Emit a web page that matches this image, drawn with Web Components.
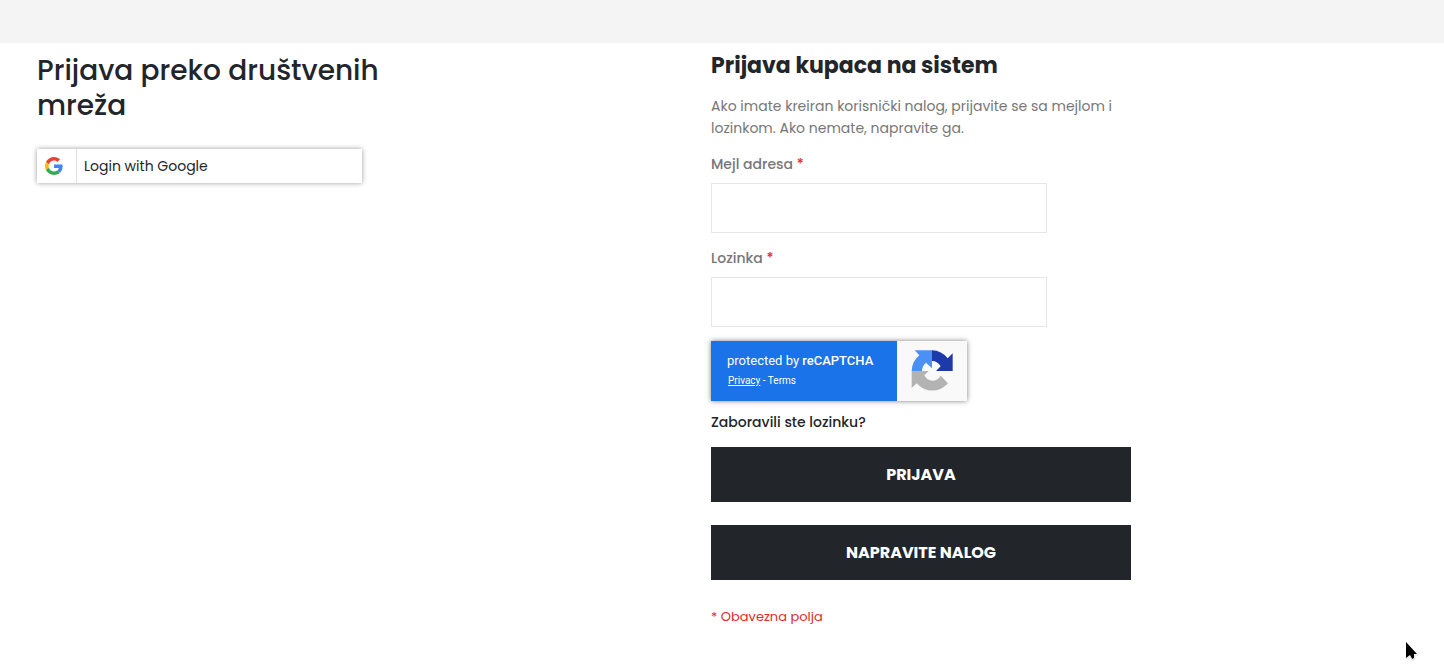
<!DOCTYPE html>
<html lang="sr-Latn">
<head>
<meta charset="utf-8">
<meta name="viewport" content="width=device-width, initial-scale=1">
<title>Prijava</title>
<style>
body { margin: 0; min-height: 100vh; background: #fff; color: #222529; font: 14px/22px Poppins, Inter, "Open Sans", sans-serif; }
</style>
</head>
<body>
<login-page></login-page>
<script>
function define(name, html) {
  customElements.define(name, class extends HTMLElement {
    constructor() {
      super();
      const t = document.createElement('template');
      t.innerHTML = html;
      this.attachShadow({ mode: 'open' }).append(t.content.cloneNode(true));
    }
  });
}

define('google-button', `
<style>
:host { display: block; }
button { display: flex; align-items: center; width: 100%; height: 34px; padding: 0; border: 0; background: #fff; color: #222529; font: inherit; box-shadow: 0 0 5px rgba(0,0,0,.4); cursor: pointer; }
.icon { display: flex; align-items: center; box-sizing: border-box; width: 40px; height: 34px; padding-left: 8px; border-right: 1px solid #e1e1e1; }
.label { padding-left: 7px; }
</style>
<button type="button">
  <span class="icon"><svg width="18" height="18" viewBox="0 0 48 48" aria-hidden="true">
    <path fill="#EA4335" d="M24 9.5c3.54 0 6.71 1.22 9.21 3.6l6.85-6.85C35.9 2.38 30.47 0 24 0 14.62 0 6.51 5.38 2.56 13.22l7.98 6.19C12.43 13.72 17.74 9.5 24 9.5z"/>
    <path fill="#4285F4" d="M46.98 24.55c0-1.57-.15-3.09-.38-4.55H24v9.02h12.94c-.58 2.96-2.26 5.48-4.78 7.18l7.73 6c4.51-4.18 7.09-10.36 7.09-17.65z"/>
    <path fill="#FBBC05" d="M10.53 28.59c-.48-1.45-.76-2.99-.76-4.59s.27-3.14.76-4.59l-7.98-6.19C.92 16.46 0 20.12 0 24c0 3.88.92 7.54 2.56 10.78l7.97-6.19z"/>
    <path fill="#34A853" d="M24 48c6.48 0 11.93-2.13 15.89-5.81l-7.73-6c-2.15 1.45-4.92 2.3-8.16 2.3-6.26 0-11.57-4.22-13.47-9.91l-7.98 6.19C6.51 42.62 14.62 48 24 48z"/>
  </svg></span>
  <span class="label"><slot></slot></span>
</button>`);

define('recaptcha-badge', `
<style>
:host { display: flex; width: 256px; height: 60px; box-shadow: 0 0 5px rgba(0,0,0,.5); color: #fff; font-family: Roboto, sans-serif; }
.text { box-sizing: border-box; width: 186px; padding: 10px 16px; background: #1a73e8; font-size: 13px; line-height: 20px; white-space: nowrap; }
strong { font-weight: 500; }
.links { padding-left: 1px; font-size: 10px; }
a { color: inherit; text-decoration: none; }
.privacy { text-decoration: underline; }
.logo { display: flex; flex: 1; align-items: center; justify-content: center; background: #f9f9f9; }
</style>
<div class="text">
  <div>protected by <strong>reCAPTCHA</strong></div>
  <div class="links"><a class="privacy" href="#privacy">Privacy</a> - <a href="#terms">Terms</a></div>
</div>
<div class="logo"><svg width="48" height="48" viewBox="0 0 144 144" aria-hidden="true">
  <path fill="#4a90f5" d="M72 10H20L34 25A62 62 0 0 0 11 72H42C42 62 46 54 54 47L72 64Z"/>
  <path fill="#1c3aa9" d="M72 10A62 62 0 0 1 119 34L134 19V72H84L98 58C92 48 84 42 72 42Z"/>
  <path fill="#b3b3b3" d="M11 72H62L49 85C58 105 86 108 98 86L120 109A62 62 0 0 1 26 109L11 123Z"/>
</svg></div>`);

define('text-field', `
<style>
:host { display: block; }
label { display: block; margin-bottom: 8px; color: #777; font-weight: 500; }
span { color: #e02b27; }
input { display: block; box-sizing: border-box; width: 80%; height: 50px; padding: 0 12px; border: 1px solid #e7e7e7; background: #fff; font: inherit; outline: 0; }
</style>
<label for="field"><slot></slot> <span>*</span></label>
<input id="field" required>`);

define('action-button', `
<style>
:host { display: block; }
button { display: block; width: 100%; height: 55px; padding: 0; border: 0; background: #222529; color: #fff; font: 700 16px/24px Poppins, Inter, "Open Sans", sans-serif; cursor: pointer; }
</style>
<button type="button"><slot></slot></button>`);

define('mouse-pointer', `
<style>
:host { position: absolute; top: 641px; right: 25px; pointer-events: none; }
svg { display: block; }
</style>
<svg width="14" height="20" viewBox="0 0 14 20" aria-hidden="true"><path fill="#000" d="M1 1v16l4-3 2 4 2-1v-4h3z"/><path fill="none" stroke="#ddd" d="M1 18l4-3 2 4 3-1v-4h3"/></svg>`);

define('login-page', `
<style>
:host { display: block; }
header { height: 43px; background: #f4f4f4; }
main { display: grid; grid-template-columns: 1fr 1fr; padding: 10px 59px 28px 37px; }
h1, h2, p { margin: 0; }
h1 { max-width: 370px; margin-bottom: 26px; font-size: 28px; line-height: 35px; font-weight: 500; }
google-button { max-width: 325px; }
.login { display: flex; flex-direction: column; gap: 14px; max-width: 420px; }
h2 { font-size: 22px; line-height: 26px; font-weight: 700; white-space: nowrap; }
p { padding-top: 2px; color: #777; }
.forgot { align-self: flex-start; margin: -4px 0 0; color: #222529; font-weight: 500; text-decoration: none; }
.actions { display: grid; gap: 23px; }
.note { padding-top: 12px; color: #e02b27; font-size: 13px; }
</style>
<header></header>
<main>
  <section>
    <h1>Prijava preko društvenih mreža</h1>
    <google-button>Login with Google</google-button>
  </section>
  <section class="login">
    <h2>Prijava kupaca na sistem</h2>
    <p>Ako imate kreiran korisnički nalog, prijavite se sa mejlom i lozinkom. Ako nemate, napravite ga.</p>
    <text-field>Mejl adresa</text-field>
    <text-field>Lozinka</text-field>
    <recaptcha-badge></recaptcha-badge>
    <a class="forgot" href="#forgot">Zaboravili ste lozinku?</a>
    <div class="actions">
      <action-button>PRIJAVA</action-button>
      <action-button>NAPRAVITE NALOG</action-button>
    </div>
    <p class="note">* Obavezna polja</p>
  </section>
</main>
<mouse-pointer></mouse-pointer>`);
</script>
</body>
</html>
